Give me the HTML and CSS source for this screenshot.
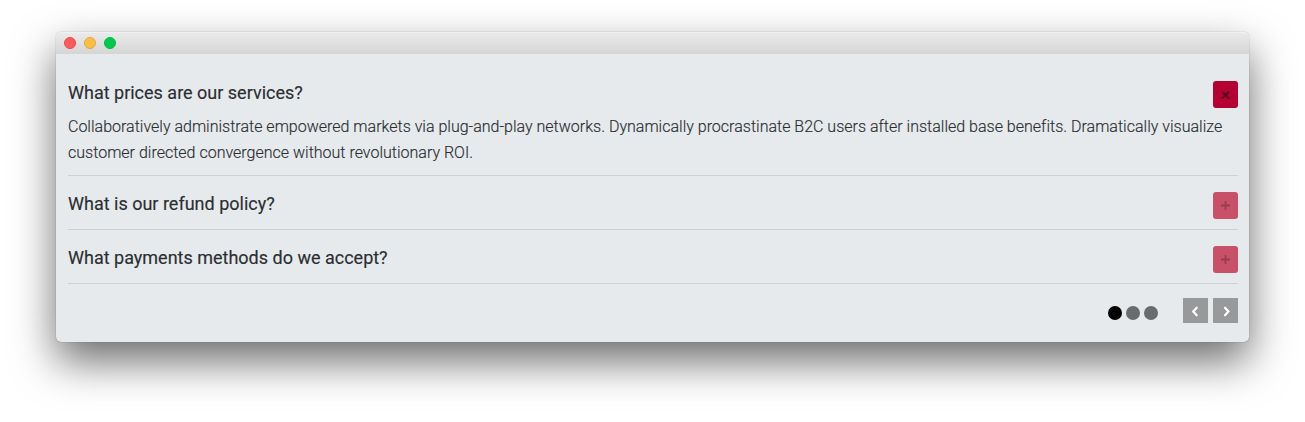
FILE: index.html
```html
<!DOCTYPE html>
<html lang="en">
<head>
<meta charset="utf-8">
<title>FAQ</title>
<link rel="stylesheet" href="styles.css">
</head>
<body>
<main class="window">
  <header class="titlebar"><span class="light close"></span><span class="light minimize"></span><span class="light expand"></span></header>
  <div class="content">
    <section class="item open">
      <div class="heading"><h2>What prices are our services?</h2><button class="toggle active" aria-label="Close"><svg width="25" height="27" viewBox="0 0 25 27"><path d="M9 10.5l7 7M16 10.5l-7 7"/></svg></button></div>
      <p class="answer"><span class="line">Collaboratively administrate empowered markets via plug-and-play networks. Dynamically procrastinate B2C users after installed base benefits. Dramatically visualize</span> <span class="line">customer directed convergence without revolutionary ROI.</span></p>
    </section>
    <section class="item"><div class="heading"><h2>What is our refund policy?</h2><button class="toggle" aria-label="Open"><svg width="25" height="27" viewBox="0 0 25 27"><path d="M8 13.5h9M12.5 9v9"/></svg></button></div></section>
    <section class="item"><div class="heading"><h2>What payments methods do we accept?</h2><button class="toggle" aria-label="Open"><svg width="25" height="27" viewBox="0 0 25 27"><path d="M8 13.5h9M12.5 9v9"/></svg></button></div></section>
    <nav class="pager">
      <div class="dots"><span class="dot current"></span><span class="dot"></span><span class="dot"></span></div>
      <button class="arrow" aria-label="Previous"><svg width="25" height="25" viewBox="0 0 25 25"><path d="M13.7 9.8l-3.4 3.7 3.4 3.7"/></svg></button>
      <button class="arrow" aria-label="Next"><svg width="25" height="25" viewBox="0 0 25 25"><path d="M12 9.8l3.4 3.7-3.4 3.7"/></svg></button>
    </nav>
  </div>
</main>
</body>
</html>
```
FILE: styles.css
```css
* { box-sizing: border-box; }
body { display: flow-root; margin: 0; height: 422px; overflow: hidden; background: #fff; font-family: Roboto, sans-serif; color: #2b2e31; }
.window { width: 1193px; height: 310px; margin: 32px 0 0 56px; border-radius: 5px; background: #e6eaed; box-shadow: 0 0 1px rgba(0,0,0,.5), 0 19px 43px rgba(0,0,0,.58); }
.titlebar { height: 22px; display: flex; align-items: center; gap: 8px; padding-left: 8px; border-radius: 5px 5px 0 0; background: linear-gradient(#ebebeb, #d5d5d5); box-shadow: inset 0 1px #f1f1f1; }
.light { width: 12px; height: 12px; border-radius: 50%; border: 1px solid #e9484b; background: #fc5b57; }
.minimize { background: #fdbe41; border-color: #e0a645; }
.expand { background: #00ca4e; border-color: #00b746; }
.content { padding: 14px 11px 0 12px; }
.item { height: 54px; padding-top: 16px; border-bottom: 1px solid #cdd1d4; }
.open { height: 108px; padding-top: 13px; }
.heading { height: 27px; display: flex; justify-content: space-between; }
h2 { margin: 0; font-size: 18px; line-height: 24px; font-weight: 400; white-space: nowrap; -webkit-text-stroke: .15px #2b2e31; }
.toggle, .arrow { display: block; border: 0; padding: 0; }
.toggle { width: 25px; height: 27px; border-radius: 3px; background: #c85069; }
.toggle.active { background: #b50033; }
svg { display: block; fill: none; stroke: #943f50; stroke-width: 1.8; }
.active svg { stroke: #5c001a; stroke-width: 2; }
.answer { margin: 6px 0 0; font-size: 16px; line-height: 26px; font-weight: 300; letter-spacing: .005px; -webkit-text-stroke: .15px #2b2e31; }
.line { display: block; white-space: nowrap; }
.pager { display: flex; justify-content: flex-end; padding-top: 14px; }
.dots { display: flex; gap: 4px; margin: 8px 25px 0 0; }
.dot { width: 14px; height: 14px; border-radius: 50%; background: #696b6d; }
.current { background: #000; }
.arrow { width: 25px; height: 25px; background: #98999b; }
.arrow + .arrow { margin-left: 5px; }
.arrow svg { stroke: #fff; stroke-width: 2.3; stroke-linecap: round; }
```
